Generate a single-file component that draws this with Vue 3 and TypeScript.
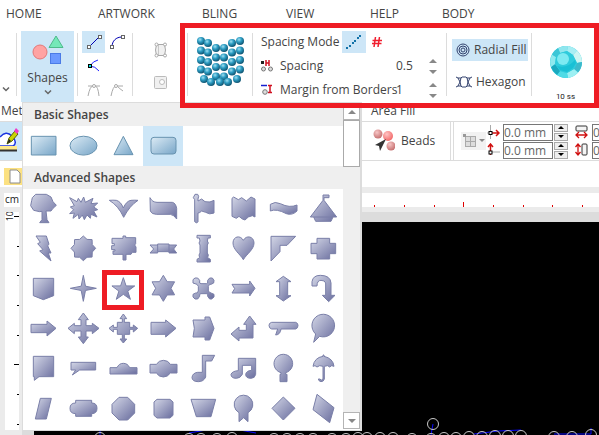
<script setup lang="ts">
import { ref } from 'vue'

interface Shape {
  name: string
  d: string
}

const tabs = [
  { label: 'HOME', width: 'w-home' },
  { label: 'ARTWORK', width: 'w-artwork' },
  { label: 'BLING', width: 'w-std' },
  { label: 'VIEW', width: 'w-std' },
  { label: 'HELP', width: 'w-help' },
  { label: 'BODY', width: 'w-std' },
]

const spacing = ref('0.5')
const margin = ref('1')
const offsetX = ref('0.0 mm')
const offsetY = ref('0.0 mm')
const sizeX = ref('0.0 mm')
const sizeY = ref('0.0 mm')

function star(points: number, outer: number, inner: number, cx: number, cy: number): string {
  const out: string[] = []
  for (let i = 0; i < points * 2; i++) {
    const r = i % 2 === 0 ? outer : inner
    const a = (Math.PI * i) / points - Math.PI / 2
    out.push(`${(cx + r * Math.cos(a)).toFixed(1)} ${(cy + r * Math.sin(a)).toFixed(1)}`)
  }
  return `M${out.join('L')}Z`
}

const basicShapes: Shape[] = [
  { name: 'Rectangle', d: 'M25 31H99V87H25Z' },
  { name: 'Ellipse', d: 'M21 59A40 28 0 1 1 102 59A40 28 0 1 1 21 59Z' },
  { name: 'Triangle', d: 'M61 31L90 86H33Z' },
  { name: 'Rounded rectangle', d: 'M33 34H90Q99 34 99 43V75Q99 84 90 84H33Q24 84 24 75V43Q24 34 33 34Z' },
]

const advancedShapes: Shape[] = [
  { name: 'Tree', d: 'M38 16H70L84 24L90 38L100 49L90 58L84 66H69L72 92L78 101H50L57 92V67L50 68L32 64L23 50L26 35L28 26Z' },
  { name: 'Burst', d: 'M20 26L42 38L46 28L54 40L62 24L67 40L90 28L84 44L104 42L92 54L104 62L92 66L102 84L84 76L82 88L72 78L64 92L58 78L48 90L46 76L30 88L34 72L20 74L32 62L22 54L34 50Z' },
  { name: 'Bird', d: 'M19 34Q30 33 40 34Q54 38 61 57Q70 36 84 34Q95 33 105 34Q80 50 62 85Q46 50 19 34Z' },
  { name: 'Wavy ribbon', d: 'M21 26Q28 40 42 40H88Q98 42 101 58V90Q94 78 82 76H40Q26 76 22 66Z' },
  { name: 'Flag', d: 'M36 16H44L47 22L45 30V36L56 30L66 38Q82 42 93 34V72Q80 78 68 70L56 66Q50 72 45 72V98L41 102L35 98V32L31 26Z' },
  { name: 'Wavy square', d: 'M27 28L32 24L46 32L56 26L70 36L84 24L96 30V84L88 80L76 84L66 93L58 90L48 82L40 88L27 82Z' },
  { name: 'Wave', d: 'M22 46Q36 36 52 44Q80 58 102 48V66Q88 80 70 74Q40 58 22 66Z' },
  { name: 'Boat', d: 'M60 34V18H78V26H63V34L101 84H90L84 97H38L32 84H22ZM32 84H90' },
  { name: 'Lightning', d: 'M39 21H70L78 46L74 50L84 72H76L84 96L50 66L60 62L44 44L52 40Z' },
  { name: 'Eight point star', d: star(8, 37, 29, 61, 58) },
  { name: 'Sign', d: 'M60 21H68V26H98V44L95 48L99 54V70H88L84 76H69V93H60V76H30V66H36V62H26V50H34V44H27V28H60Z' },
  { name: 'Banner', d: 'M21 48H44V45H78V48H101L92 60L101 72H78V68H44V72H21L32 60ZM44 48V68M78 48V68' },
  { name: 'Pillar', d: 'M42 19H82V27H75L73 36L76 42L73 48V72L76 78L74 86L82 91V99H42V91L50 86L48 78L51 72V48L48 42L51 36L49 27H42Z' },
  { name: 'Heart', d: 'M61 34C52 17 30 22 30 42C30 62 52 76 61 92C70 76 93 62 93 42C93 22 70 17 61 34Z' },
  { name: 'Corner', d: 'M24 22H98L72 49H51V68L24 96Z' },
  { name: 'Plus', d: 'M42 28H80V43H98V74H80V90H42V74H24V43H42Z' },
  { name: 'Shield', d: 'M31 28H92V80L61 92L31 80Z' },
  { name: 'Four point star', d: star(4, 39, 9, 61, 58) },
  { name: 'Star', d: star(5, 36, 14, 61, 62) },
  { name: 'Six point star', d: star(6, 39, 23, 61, 58) },
  { name: 'Crossed bones', d: 'M36 27H44L50 34V42L54 44H70L74 42V34L80 27H88L93 34L92 42L84 46H80L76 52V66L80 70L84 72L93 76V84L86 90H80L74 82V76L70 74H54L50 76V82L44 90H36L30 84V76L38 72H42L46 66V52L42 46L30 42V32Z' },
  { name: 'Notched arrow', d: 'M27 46H80V36L96 58L80 81V72H27L35 59Z' },
  { name: 'Up down arrow', d: 'M61 22L84 38H74V80H84L61 96L39 80H50V38H39Z' },
  { name: 'U-turn arrow', d: 'M27 51V38Q30 19 52 19Q82 19 84 42V79H96L77 98L58 79H68V42Q66 34 54 34Q42 34 42 51Z' },
  { name: 'Right arrow', d: 'M24 46H72V36L99 58L72 81V71H24Z' },
  { name: 'Four arrows', d: 'M61 12L76 32H69V50H88V43L108 58L88 74V66H69V84H76L61 104L46 84H54V66H34V74L15 58L34 43V50H54V32H46Z' },
  { name: 'Square with arrows', d: 'M61 15L71 29H64V40H80V55H91V48L104 58L91 69V61H80V76H64V90H71L61 102L51 90H58V76H43V61H31V69L18 58L31 48V55H43V40H58V29H51Z' },
  { name: 'Block arrow', d: 'M24 40H68V33L99 58L68 84V76H24Z' },
  { name: 'Pentagon', d: 'M30 33H66V24H80L93 58L80 93H66V84H30L34 58Z' },
  { name: 'Bent arrow', d: 'M80 21L99 46H90V87H48V96L24 75L48 54V64H70V46H62Z' },
  { name: 'Rounded callout', d: 'M26 40H98Q105 42 105 49Q105 58 98 60H54Q52 77 38 78L44 60H26Q18 58 18 49Q18 42 26 40Z' },
  { name: 'Balloon', d: 'M50 82A34 34 0 1 0 38 75L32 100Z' },
  { name: 'Square callout', d: 'M31 22H92V83H48L34 94V83H31Z' },
  { name: 'Wide callout', d: 'M24 40H98V63H50L28 78L38 63H24Z' },
  { name: 'Domed box', d: 'M21 56H42Q48 43 61 43Q74 43 80 56H102V75H21Z' },
  { name: 'Round centre box', d: 'M21 46H40Q48 34 61 34Q76 34 82 46H102V72H82Q74 84 61 84Q48 84 40 72H21Z' },
  { name: 'Note', d: 'M58 19H95L86 36H68V84Q62 98 46 98Q28 98 27 86Q28 72 44 70H58Z' },
  { name: 'Double note', d: 'M46 28H98V76Q96 88 84 88Q68 88 68 76Q70 65 86 64V49H58V76Q52 88 40 88Q24 88 24 76Q28 66 46 65Z' },
  { name: 'Mirror', d: 'M54 71A28 28 0 1 1 68 71V76H72V98H51V76H54Z' },
  { name: 'Umbrella', d: 'M60 18H63V22Q90 28 93 52L86 50L80 54L74 50L64 52V90Q62 98 54 98Q46 96 46 90H50Q56 96 60 90V52L50 50L42 54L36 50L30 52Q34 26 60 22Z' },
  { name: 'Parallelogram', d: 'M52 28H85L70 90H37Z' },
  { name: 'Plaque', d: 'M38 34H86V42Q102 42 102 58Q102 74 86 74V82H38V74Q21 74 21 58Q21 42 38 42Z' },
  { name: 'Octagon', d: 'M48 25H74L95 46V72L74 93H48L27 72V46Z' },
  { name: 'Soft square', d: 'M42 31H81L90 39V79L81 87H42L33 79V39Z' },
  { name: 'Bucket', d: 'M24 31H98L84 83H40Z' },
  { name: 'Award', d: 'M48 71A28 28 0 1 1 75 71V98L62 86L48 98Z' },
  { name: 'Diamond', d: 'M61 24L96 58L61 93L27 58Z' },
  { name: 'Rhombus', d: 'M42 16L93 56L80 101L30 62Z' },
]

// Centres of the bead swatch: six columns of four, then the curved bottom row.
const beads: [number, number][] = []
for (let i = 0; i < 4; i++) {
  const y = i * 9.5
  beads.push([5, 6 + y], [12, 8 + y], [20, 13 + y], [28, 13 + y], [36, 8 + y], [44, 6 + y])
}
beads.push([8, 44], [15, 47], [24, 47], [32, 47], [41, 44])

const hTicks = Array.from({ length: 40 }, (_, i) => ({
  x: Math.round(26 + i * 29.67),
  major: i % 5 === 4,
}))
const vTicks = Array.from({ length: 30 }, (_, i) => ({
  y: Math.round(9 + i * 29.67),
  major: i % 5 === 0,
}))

const stones: [number, number][] = [
  [66, 11], [155, 12], [167, 12], [183, 12], [198, 11], [240, 12], [253, 12], [266, 12], [279, 12], [298, 12], [312, 12], [324, 11],
  [333, 11], [346, 11], [359, 11], [378, 12], [397, 12], [399, -3], [410, 11], [422, 11], [435, 10],
  [448, 10], [461, 9], [474, 9], [487, 9], [520, 10], [538, 10], [557, 8],
]
</script>

<template>
  <div class="app">
    <svg class="defs" aria-hidden="true">
      <defs>
        <linearGradient id="steel" x1="0" y1="0" x2="1" y2="1">
          <stop offset="0" stop-color="#d3d6e6" />
          <stop offset="1" stop-color="#696d9e" />
        </linearGradient>
        <linearGradient id="sky" x1="0" y1="0" x2="1" y2="1">
          <stop offset="0" stop-color="#dcebf5" />
          <stop offset="1" stop-color="#78a6c8" />
        </linearGradient>
        <radialGradient id="bead" cx=".38" cy=".32" r=".7">
          <stop offset="0" stop-color="#9fe0f2" />
          <stop offset=".45" stop-color="#2c9cc2" />
          <stop offset="1" stop-color="#0d516e" />
        </radialGradient>
        <radialGradient id="pink" cx=".38" cy=".32" r=".7">
          <stop offset="0" stop-color="#f7c6c6" />
          <stop offset="1" stop-color="#c56f6f" />
        </radialGradient>
        <radialGradient id="coral" cx=".38" cy=".32" r=".7">
          <stop offset="0" stop-color="#ffc4c4" />
          <stop offset="1" stop-color="#f26868" />
        </radialGradient>
      </defs>
    </svg>

    <nav class="tabs">
      <a v-for="t in tabs" :key="t.label" href="#" :class="t.width">{{ t.label }}</a>
    </nav>

    <div class="ribbon">
      <div class="group edge">
        <button class="plain" aria-label="More"><svg width="8" height="5" viewBox="0 0 8 5"><path class="chev" d="M1 .5L4 3.5L7 .5" /></svg></button>
      </div>
      <div class="group shapes-group">
        <button class="shapes-btn">
          <svg width="32" height="32" viewBox="0 0 32 32">
            <circle cx="8" cy="18" r="7" fill="#ffa3a3" stroke="#e37878" />
            <path d="M24 2L31 13.5H17Z" fill="#74e8b8" stroke="#4dbb8b" />
            <rect x="18.5" y="19.5" width="10" height="10" fill="#6b99ff" stroke="#4b7be6" />
          </svg>
          <span>Shapes</span>
          <svg width="8" height="5" viewBox="0 0 8 5"><path class="chev" d="M1 .5L4 3.5L7 .5" /></svg>
        </button>
      </div>
      <div class="group tools">
        <button class="on" aria-label="Line">
          <svg width="16" height="16" viewBox="0 0 16 16"><path d="M3 13L13 3" stroke="#0000b4" fill="none" /><g fill="#fff" stroke="#666"><rect x="1.5" y="11.5" width="3" height="3" /><rect x="12.5" y="1.5" width="3" height="3" /></g></svg>
        </button>
        <button aria-label="Arc">
          <svg width="16" height="16" viewBox="0 0 16 16"><path d="M3 13C3 7 7 3 13 3" stroke="#0000b4" fill="none" /><g fill="#fff" stroke="#666"><rect x="1.5" y="11.5" width="3" height="3" /><rect x="12.5" y="1.5" width="3" height="3" /></g></svg>
        </button>
        <button aria-label="Node">
          <svg width="16" height="16" viewBox="0 0 16 16"><path d="M12 2Q7 3 4 8Q9 8 13 13" stroke="#2222ff" fill="none" /><rect x="2.5" y="6.5" width="3" height="3" fill="#00e0e0" stroke="#000" /></svg>
        </button>
        <span></span>
        <button aria-label="Symmetric node">
          <svg width="16" height="16" viewBox="0 0 16 16"><path d="M2 4H14M2 14Q4 4 7 4M9 4Q12 4 13 14" stroke="#aaa" fill="none" /><circle cx="8" cy="4" r="1.5" fill="#fff" stroke="#aaa" /></svg>
        </button>
        <button aria-label="Smooth node">
          <svg width="16" height="16" viewBox="0 0 16 16"><path d="M2 14Q4 4 7 4H14M8 4Q11 7 14 9" stroke="#aaa" fill="none" /><circle cx="7" cy="4" r="1.5" fill="#fff" stroke="#aaa" /></svg>
        </button>
      </div>
      <div class="group envelope">
        <button class="plain" aria-label="Envelope">
          <svg width="14" height="16" viewBox="0 0 14 16"><path d="M2.5 2.5H10.5Q12.500 8 10.5 13.5H2.5Q.5 8 2.5 2.5Z" fill="#f0f0f0" stroke="#a8a8a8" /><path d="M4.500 3V13" stroke="#c8c8c8" /><g fill="#fff" stroke="#a8a8a8"><circle cx="2.500" cy="2.500" r="1.500" /><circle cx="11" cy="2.500" r="1.500" /><circle cx="2.500" cy="13.500" r="1.500" /><circle cx="11" cy="13.500" r="1.500" /></g></svg>
        </button>
        <button class="plain" aria-label="Hole">
          <svg width="14" height="14" viewBox="0 0 14 14"><rect x=".5" y=".5" width="12" height="12" rx="1" fill="#f0f0f0" stroke="#bbb" /><circle cx="8" cy="6" r="2.500" fill="#fff" stroke="#bbb" /></svg>
        </button>
      </div>
      <div class="group swatch">
        <svg width="48" height="52" viewBox="0 0 48 52">
          <circle v-for="(b, i) in beads" :key="i" :cx="b[0]" :cy="b[1]" r="4" fill="url(#bead)" />
        </svg>
      </div>
      <div class="group fields">
        <div class="mode">
          <span>Spacing Mode</span>
          <button class="on dots" aria-label="Spacing by line">
            <svg width="16" height="16" viewBox="0 0 16 16" fill="#1272a8"><rect x="0" y="13" width="2" height="2" /><rect x="3" y="11" width="2" height="2" /><rect x="6" y="8" width="2" height="2" /><rect x="8" y="6" width="2" height="2" /><rect x="11" y="3" width="2" height="2" /><rect x="13" y="1" width="2" height="2" /></svg>
          </button>
          <button class="hash" aria-label="Spacing by count">
            <svg width="10" height="10" viewBox="0 0 10 10"><path d="M3.5 0L2 10M7.5 0L6 10M.5 3.5H10M0 6.5H9.5" stroke="#f02030" stroke-width="1.500" fill="none" /></svg>
          </button>
        </div>
        <div class="field">
          <svg width="12" height="12" viewBox="0 0 12 12"><rect x="0" y="1" width="3" height="3" fill="#222" /><path d="M5 0V6M8 0V6M5 3H8" stroke="#d01020" stroke-width="1.500" fill="none" /><g fill="#ddd" stroke="#777"><circle cx="2.500" cy="9" r="2" /><circle cx="9.500" cy="9" r="2" /></g></svg>
          <label for="spacing">Spacing</label>
          <input id="spacing" v-model="spacing" />
          <span class="arrows"><button class="up" aria-label="Increase spacing"></button><button class="down" aria-label="Decrease spacing"></button></span>
        </div>
        <div class="field">
          <svg width="12" height="12" viewBox="0 0 12 12"><path d="M0 1.5H6" stroke="#1520d0" stroke-width="1.500" /><path d="M7 1.500H11M9 1.500V8M7 8.500H11" stroke="#d01020" stroke-width="1.500" fill="none" /><circle cx="4" cy="8" r="2.300" fill="#ddd" stroke="#777" /></svg>
          <label for="margin">Margin from Borders</label>
          <input id="margin" v-model="margin" />
          <span class="arrows"><button class="up" aria-label="Increase margin"></button><button class="down" aria-label="Decrease margin"></button></span>
        </div>
      </div>
      <div class="group fills">
        <button class="on">
          <svg width="14" height="14" viewBox="0 0 14 14" fill="none" stroke="#33426e"><circle cx="7" cy="7" r="6" /><circle cx="7" cy="7" r="4" /><circle cx="7" cy="7" r="2" /></svg>
          Radial Fill
        </button>
        <button>
          <svg width="16" height="12" viewBox="0 0 16 12" fill="none" stroke="#33426e"><path d="M0 1L2 2L4 6L2 10L0 11M16 1L14 2L12 6L14 10L16 11M2 2H5L6 1H10L11 2H14M2 10H5L6 11H10L11 10H14M5 2L4 6L5 10M11 2L12 6L11 10" /></svg>
          Hexagon
        </button>
      </div>
      <div class="group gem">
        <svg width="32" height="32" viewBox="0 0 32 32">
          <circle cx="16" cy="16" r="16" fill="#35cfe0" />
          <path d="M8 2.100A16 16 0 0 1 18 .1L17 5L10 7Z" fill="#8fe6ee" />
          <path d="M18 .1A16 16 0 0 1 27 4.500L23 9L17 5Z" fill="#a9eef4" />
          <path d="M27 4.500A16 16 0 0 1 32 16L27 17L23 9Z" fill="#cdf5f3" />
          <path d="M32 16A16 16 0 0 1 28 26.500L24 23L27 17Z" fill="#3cb9cb" />
          <path d="M28 26.500A16 16 0 0 1 18 31.900L17 27L24 23Z" fill="#9df0f3" />
          <path d="M18 31.900A16 16 0 0 1 7 29L10 25L17 27Z" fill="#4fdbe6" />
          <path d="M7 29A16 16 0 0 1 1 21L5 18L10 25Z" fill="#1aa9bf" />
          <path d="M1 21A16 16 0 0 1 2 8.500L6 11L5 18Z" fill="#8fe9ee" />
          <path d="M2 8.500A16 16 0 0 1 8 2.100L10 7L6 11Z" fill="#3cc6d6" />
          <path d="M10 7L17 5L23 9L27 17L24 23L17 27L10 25L5 18L6 11Z" fill="#2fcbdc" />
          <circle cx="13" cy="13" r="6" fill="#7deaf2" />
          <path d="M7 20Q17 23 25 14L26 17L23 22L17 26L10 24Z" fill="#19c0d5" />
        </svg>
        <span>10 ss</span>
      </div>
    </div>

    <div class="captions">
      <span class="method">Met</span>
      <span class="area">Area Fill</span>
    </div>

    <div class="toolbar">
      <button class="pen on" aria-label="Draw">
        <svg width="20" height="28" viewBox="0 0 20 28"><path d="M0 10Q6 3 12 9Q18 16 13 19H0" fill="#fff" stroke="#1a34e0" stroke-width="1.500" /><path d="M7 17L9 11L15 4L18 7L12 14Z" fill="#c9d400" stroke="#5a6400" /><path d="M14 4L16 1L19 4L17 7Z" fill="#f03ac8" /><path d="M7 17L9 12L11 14Z" fill="#222" /><rect y="19" width="17" height="4" fill="#ffe98a" /><path d="M0 23.500H17" stroke="#333" stroke-width="2" /></svg>
      </button>
      <div class="beads">
        <button class="plain">
          <svg width="22" height="24" viewBox="0 0 22 24"><circle cx="5" cy="5" r="4.500" fill="url(#pink)" /><circle cx="15" cy="7" r="5" fill="url(#coral)" /><circle cx="18" cy="17" r="4.500" fill="url(#pink)" /><path d="M13 10L2 16L6 17L7 22Z" fill="#333" /></svg>
          Beads
        </button>
      </div>
      <div class="measure">
        <button class="grid-btn" aria-label="Reference point">
          <svg width="22" height="14" viewBox="0 0 22 14"><rect x="2.500" y="2.500" width="10" height="10" fill="#ddd" stroke="#aaa" /><path d="M7.500 2V13M2 7.500H13" stroke="#aaa" /><rect width="3" height="3" fill="#999" /><path d="M16 5H22L19 8Z" fill="#888" /></svg>
        </button>
        <div class="pair">
          <svg width="13" height="14" viewBox="0 0 13 14"><path d="M3.500 0V14M0 8H4" stroke="#aaa" /><path d="M4 8H12M9 5L12 8L9 11" stroke="#d01010" stroke-width="1.500" fill="none" /><rect x="2" y="6.500" width="3" height="3" fill="#fff" stroke="#000" /></svg>
          <input v-model="offsetX" aria-label="Horizontal offset" />
          <span class="steps"><button class="up" aria-label="Increase horizontal offset"></button><button class="down" aria-label="Decrease horizontal offset"></button></span>
          <svg width="13" height="14" viewBox="0 0 13 14"><rect x="1" y="1" width="11" height="5" rx="1" fill="#f4f4f4" stroke="#333" /><path d="M1 10H12M4 7L1 10L4 13M9 7L12 10L9 13" stroke="#d01010" stroke-width="1.300" fill="none" /></svg>
          <input v-model="sizeX" aria-label="Width" />
        </div>
        <div class="pair">
          <svg width="13" height="14" viewBox="0 0 13 14"><path d="M3.500 9H13" stroke="#aaa" /><path d="M3.500 9V1M1 4L3.500 1L6 4M3.500 9V12" stroke="#d01010" stroke-width="1.500" fill="none" /><rect x="2" y="8" width="3" height="3" fill="#fff" stroke="#000" /></svg>
          <input v-model="offsetY" aria-label="Vertical offset" />
          <span class="steps"><button class="up" aria-label="Increase vertical offset"></button><button class="down" aria-label="Decrease vertical offset"></button></span>
          <svg width="13" height="14" viewBox="0 0 13 14"><rect x="7" y="1" width="5" height="11" rx="1" fill="#f4f4f4" stroke="#333" /><path d="M3 1V12M.5 4L3 1L5.500 4M.5 9L3 12L5.500 9" stroke="#d01010" stroke-width="1.300" fill="none" /></svg>
          <input v-model="sizeY" aria-label="Height" />
        </div>
      </div>
    </div>

    <div class="documents">
      <button class="doc" aria-label="New document">
        <svg width="12" height="15" viewBox="0 0 12 15"><path d="M1 1H8L11 4V14H1Z" fill="#fff" stroke="#8c8c8c" /></svg>
      </button>
    </div>

    <div class="hruler">
      <span class="unit">cm</span>
      <svg class="hscale" aria-hidden="true">
        <rect v-for="t in hTicks" :key="t.x" :x="t.x" :y="t.major ? 9 : 12" width="1" :height="t.major ? 5 : 2" fill="#e00000" />
      </svg>
    </div>

    <div class="stage">
      <div class="vruler">
        <span class="number">10</span>
        <svg class="vscale" aria-hidden="true">
          <rect v-for="t in vTicks" :key="t.y" :x="t.major ? 9 : 12" :y="t.y" :width="t.major ? 5 : 2" height="1" fill="#000" />
        </svg>
      </div>
      <div class="canvas">
        <svg width="565" height="20" viewBox="0 -12 565 20">
          <path d="M66 8V2M155 6Q190 -2 222 6M399 -3L397 8M440 7Q465 3 487 3M520 7H557V1" fill="none" stroke="#0a0aff" />
          <circle v-for="(s, i) in stones" :key="i" :cx="s[0]" :cy="s[1]" r="5.500" fill="none" stroke="#c8c8c8" />
        </svg>
      </div>
    </div>

    <section class="gallery" aria-label="Shape gallery">
      <div class="list">
        <h2>Basic Shapes</h2>
        <div class="cells">
          <button v-for="(s, i) in basicShapes" :key="s.name" :class="{ on: i === 3 }" :aria-label="s.name">
            <svg width="40" height="40" viewBox="0 0 120 120"><path :d="s.d" fill="url(#sky)" stroke="#6893b0" stroke-width="3" /></svg>
          </button>
        </div>
        <h2>Advanced Shapes</h2>
        <div class="cells">
          <button v-for="(s, i) in advancedShapes" :key="s.name" :class="{ marked: i === 18 }" :aria-label="s.name">
            <svg width="40" height="40" viewBox="0 0 120 120"><path :d="s.d" fill="url(#steel)" stroke="#7a7fa8" stroke-width="3" /></svg>
          </button>
        </div>
      </div>
      <div class="scroll">
        <button class="up" aria-label="Scroll up"></button>
        <div class="thumb"></div>
        <div class="track"></div>
        <button class="down" aria-label="Scroll down"></button>
      </div>
    </section>

    <div class="highlight"></div>
  </div>
</template>

<style>
body {
  margin: 0;
  background: #fff;
}
</style>

<style scoped>
.app {
  position: relative;
  display: flex;
  flex-direction: column;
  min-height: 100vh;
  overflow: hidden;
  background: #fff;
  color: #444;
  font: 12px/16px 'Open Sans', 'Noto Sans', sans-serif;
}
.app *,
.app *::before,
.app *::after {
  box-sizing: border-box;
}
.defs {
  position: absolute;
  width: 0;
  height: 0;
}
svg {
  display: block;
  flex: none;
}
button {
  display: flex;
  align-items: center;
  justify-content: center;
  padding: 0;
  border: 0;
  background: none;
  color: inherit;
  font: inherit;
}
input {
  min-width: 0;
  padding: 0;
  border: 0;
  background: none;
  color: inherit;
  font: inherit;
}
.on {
  background: #cde6f7;
}
.chev {
  fill: none;
  stroke: #666;
  stroke-width: 1.5;
}
.up::before,
.down::before {
  content: '';
  border: 4px solid transparent;
}
.up::before {
  border-top: 0;
  border-bottom-color: #888;
}
.down::before {
  border-bottom: 0;
  border-top-color: #888;
}

.tabs {
  display: flex;
  height: 30px;
  padding: 6px 0 0 6px;
}
.tabs a {
  color: #444;
  text-decoration: none;
}
.w-home {
  width: 92px;
}
.w-artwork {
  width: 104px;
}
.w-std {
  width: 84px;
}
.w-help {
  width: 72px;
}

.ribbon {
  display: flex;
  height: 72px;
}
.group {
  display: flex;
  position: relative;
}
.group:not(:last-child)::after {
  content: '';
  position: absolute;
  top: 3px;
  right: 0;
  bottom: 6px;
  width: 1px;
  background: #dcdcdc;
}
.edge {
  width: 17px;
  align-items: flex-end;
  padding: 0 0 10px 2px;
}
.shapes-group {
  width: 61px;
  padding-left: 4px;
}
.shapes-btn {
  width: 53px;
  margin-top: 1px;
  flex-direction: column;
  justify-content: flex-start;
  gap: 4px;
  padding-top: 3px;
  background: #cde6f7;
}
.tools {
  width: 55px;
  display: grid;
  grid-template-columns: 23px 23px;
  grid-template-rows: 24px 24px 24px;
  padding-left: 4px;
}
.tools .on {
  height: 22px;
  margin-top: 1px;
}
.envelope {
  width: 55px;
  flex-direction: column;
  align-items: center;
  justify-content: center;
  gap: 18px;
}
.swatch {
  width: 65px;
  padding: 5px 0 0 8px;
}
.fields {
  width: 194px;
  flex-direction: column;
  padding-left: 8px;
}
.mode {
  display: grid;
  grid-template-columns: 81px 24px 22px;
  align-items: center;
  height: 24px;
}
.dots {
  height: 22px;
}
.field {
  display: grid;
  grid-template-columns: 19px 116px 31px 12px;
  align-items: center;
  height: 24px;
  white-space: nowrap;
}
.arrows {
  display: flex;
  flex-direction: column;
  align-items: center;
  gap: 7px;
}
.fills {
  width: 85px;
  flex-direction: column;
  gap: 10px;
  padding: 9px 4px 0 5px;
}
.fills button {
  height: 22px;
  justify-content: flex-start;
  gap: 4px;
  padding-left: 4px;
  white-space: nowrap;
}
.gem {
  flex: 1;
  flex-direction: column;
  align-items: center;
  gap: 13px;
  padding-top: 16px;
}
.gem span {
  color: #222;
  font: 8px/12px Roboto, sans-serif;
}

.captions {
  display: flex;
  height: 20px;
  padding: 1px 0 0 1px;
  border-bottom: 1px solid #dcdcdc;
}
.method {
  width: 370px;
}

.toolbar {
  display: flex;
  height: 39px;
  border-bottom: 1px solid #dcdcdc;
}
.pen {
  width: 22px;
  justify-content: flex-start;
}
.beads {
  display: flex;
  align-items: center;
  width: 429px;
  padding-left: 351px;
  border-right: 1px solid #dcdcdc;
}
.beads button {
  gap: 6px;
}
.measure {
  flex: 1;
  display: grid;
  grid-template-columns: 33px 1fr;
  grid-template-rows: 18px 18px;
  margin-left: 2px;
  padding-top: 1px;
  border-left: 1px solid #dcdcdc;
  min-width: 0;
}
.grid-btn {
  grid-row: 1 / 3;
  align-self: center;
  width: 25px;
  height: 18px;
  margin-left: 7px;
  background: #f2f2f2;
}
.pair {
  display: grid;
  grid-template-columns: 16px 51px 21px 17px 50px;
  align-items: center;
  overflow: hidden;
}
.pair input {
  width: 50px;
  height: 17px;
  border: 1px solid #777;
  background: #fff;
  color: #666;
}
.steps {
  display: grid;
  grid-template-rows: 8px 8px;
  gap: 1px;
  width: 14px;
}
.steps button {
  border: 1px solid #aaa;
  background: #eee;
}
.steps .up::before {
  border-width: 0 3px 3px;
  border-bottom-color: #000;
}
.steps .down::before {
  border-width: 3px 3px 0;
  border-top-color: #000;
}

.documents {
  height: 26px;
  padding: 7px 0 0 4px;
}
.doc {
  width: 22px;
  height: 17px;
  background: #fce181;
}

.hruler {
  display: flex;
  height: 25px;
  padding: 6px 0 5px 4px;
  background: #ebebeb;
}
.unit {
  width: 16px;
  background: #fff;
  color: #222;
  font-size: 10px;
  line-height: 13px;
  text-align: center;
}
.hscale {
  flex: 1;
  margin-left: 2px;
  height: 14px;
  background: #fff;
}

.stage {
  flex: 1;
  display: flex;
  min-height: 223px;
  overflow: hidden;
}
.vruler {
  position: relative;
  width: 22px;
  padding-left: 5px;
  background: #ebebeb;
}
.vscale {
  width: 14px;
  height: 100%;
  margin-top: -5px;
  padding-bottom: 0;
  background: #fff;
}
.number {
  position: absolute;
  top: -1px;
  left: 4px;
  color: #222;
  font-size: 9px;
  line-height: 12px;
  writing-mode: vertical-rl;
  rotate: 180deg;
}
.canvas {
  flex: 1;
  display: flex;
  align-items: flex-end;
  border: solid #dcdcdc;
  border-width: 10px 0 0 12px;
  background: #000;
  overflow: hidden;
}

.gallery {
  position: absolute;
  top: 102px;
  left: 22px;
  display: flex;
  padding-bottom: 1px;
  border: 1px solid #dcdcdc;
  border-right-width: 2px;
  background: #fff;
}
.list {
  width: 320px;
}
.gallery h2 {
  height: 23px;
  margin: 0;
  padding-left: 11px;
  background: #efefef;
  font-size: 12px;
  font-weight: 600;
  line-height: 23px;
}
.cells {
  display: grid;
  grid-template-columns: repeat(8, 40px);
}
.marked {
  position: relative;
}
.marked::after {
  content: '';
  position: absolute;
  inset: 1px -1px -1px;
  border: 5px solid #ee1c24;
}
.scroll {
  display: flex;
  flex-direction: column;
  width: 17px;
  background: #efefef;
}
.scroll button {
  height: 17px;
  border: 1px solid #b4b4b4;
  background: #fff;
}
.thumb {
  height: 47px;
  border: 1px solid #aaa;
  background: #fff;
}
.track {
  flex: 1;
}

.highlight {
  position: absolute;
  top: 23px;
  left: 180px;
  right: 0;
  height: 85px;
  border: 5px solid #ee1c24;
  pointer-events: none;
}
</style>
